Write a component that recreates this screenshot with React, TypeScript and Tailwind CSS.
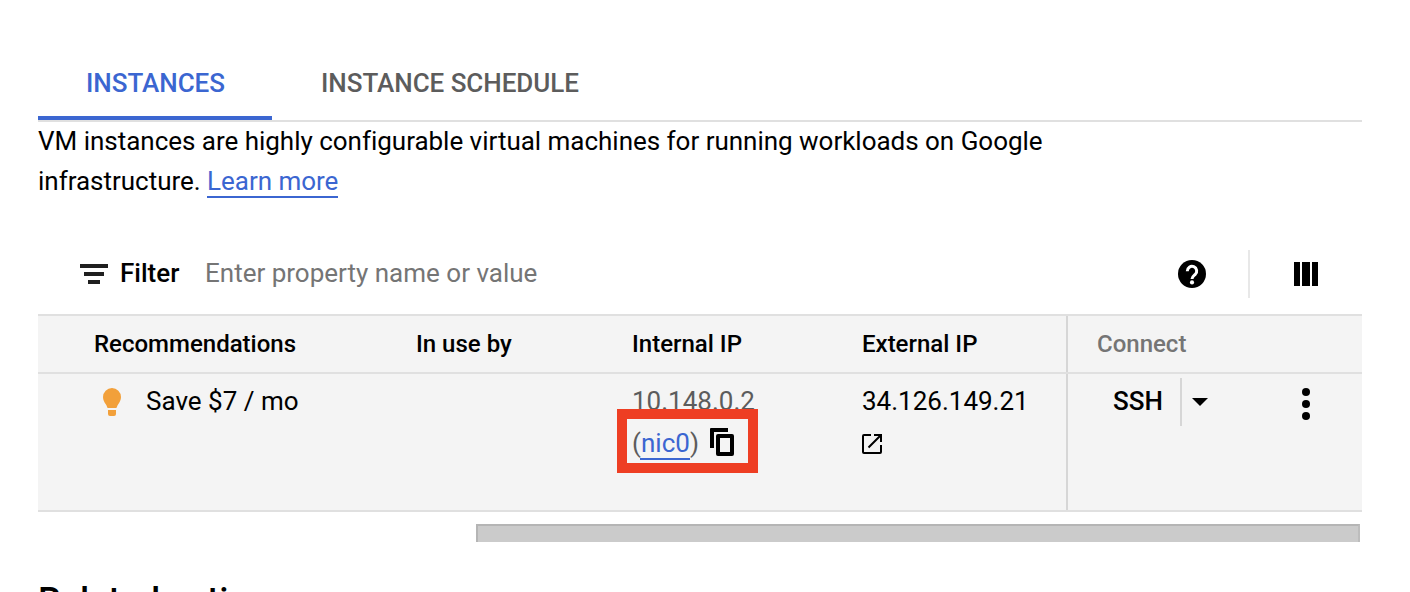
import type { ReactNode } from "react";

function Tabs() {
  return (
    <nav className="flex h-[76px] shrink-0 border-b-2 border-[#e0e0e0] text-[26px] leading-[74px] font-medium tracking-[-0.04px] whitespace-nowrap">
      <div className="w-[234px] border-b-4 border-[#3b66d1] pl-12 text-[#3b66d1]">INSTANCES</div>
      <div className="pl-[49px] text-[#5c5c5c]">INSTANCE SCHEDULE</div>
    </nav>
  );
}

function FilterBar() {
  return (
    <div className="flex h-12 items-center">
      <svg className="ml-[42px] h-5 w-7" viewBox="0 0 28 20" fill="#1f1f1f">
        <path d="M0 0h28v4H0zM4 8h20v4H4zM8 16h12v4H8z" />
      </svg>
      <span className="ml-3 w-[85px] pb-0.5 text-[26px] font-medium">Filter</span>
      <span className="flex-1 pb-0.5 text-[26px] text-[#757575]">Enter property name or value</span>
      <svg className="h-7 w-7" viewBox="0 0 28 28">
        <circle cx="14" cy="14" r="14" />
        <path
          d="M9.300 11.200a4.700 4.700 0 1 1 7.900 3.300c-1.900 1.600-3.200 2.200-3.200 4.600"
          fill="none"
          stroke="#fff"
          strokeWidth="3"
        />
        <circle cx="14" cy="22.400" r="2.100" fill="#fff" />
      </svg>
      <div className="ml-[42px] h-12 w-0.5 bg-[#e8e8e8]" />
      <svg className="mr-11 ml-11 h-6 w-6" viewBox="0 0 24 24">
        <path d="M0 0h6v24H0zM8 0h8v24H8zM18 0h6v24h-6z" />
      </svg>
    </div>
  );
}

function HeaderCell({ children }: { children: ReactNode }) {
  return <div className="leading-[56px]">{children}</div>;
}

function InstancesTable() {
  return (
    <div className="border-y-2 border-[#e0e0e0] bg-[#f4f4f4] whitespace-nowrap">
      <div className="grid h-[58px] grid-cols-[322px_216px_230px_204px_1fr] border-b-2 border-[#e0e0e0] pl-14 text-[24px] font-medium">
        <HeaderCell>Recommendations</HeaderCell>
        <HeaderCell>In use by</HeaderCell>
        <HeaderCell>Internal IP</HeaderCell>
        <HeaderCell>External IP</HeaderCell>
        <div className="border-l-2 border-[#d6d6d6] pl-[29px] leading-[56px] text-[#757575]">Connect</div>
      </div>
      <div className="grid h-[136px] grid-cols-[322px_216px_230px_204px_1fr] pl-14 text-[26px] leading-[42px]">
        <div className="flex items-start pt-1.5">
          <svg className="mt-2 ml-[9px] h-7 w-[18px]" viewBox="0 0 18 28" fill="#f2a03a">
            <path d="M9 0a9 9 0 0 0-9 9c0 3 1.200 4.800 2.600 7 .8 1.200 1.200 2 1.500 3 .2.700.5 1 1.200 1h7.400c.7 0 1-.3 1.200-1 .3-1 .7-1.800 1.500-3 1.400-2.200 2.600-4 2.600-7a9 9 0 0 0-9-9zM5 22h8v4a2 2 0 0 1-2 2H7a2 2 0 0 1-2-2z" />
          </svg>
          <span className="ml-[25px]">Save $7 / mo</span>
        </div>
        <div />
        <div className="relative pt-1.5 text-[#5c5c5c]">
          <div>10.148.0.2</div>
          <div className="flex items-start">
            <span className="w-2">(</span>
            <a className="h-[38px] w-[50px] border-b-2 border-[#3b66d1] pl-px text-[#3b66d1]">nic0</a>
            <span className="w-5">)</span>
            <svg className="mt-1.5 h-7 w-6" viewBox="0 0 24 28">
              <path d="M1 0h17v4H4v16H0V1a1 1 0 0 1 1-1z" />
              <path
                fillRule="evenodd"
                d="M8 6h14a2 2 0 0 1 2 2v18a2 2 0 0 1-2 2H8a2 2 0 0 1-2-2V8a2 2 0 0 1 2-2zM10 10v14h10V10z"
              />
            </svg>
          </div>
          <div className="absolute top-[35px] -left-[15px] h-16 w-[141px] border-[10px] border-[#ee3e23]" />
        </div>
        <div className="pt-1.5">
          <div>34.126.149.21</div>
          <svg className="mt-3 h-5 w-5" viewBox="0 0 20 20" fill="none" stroke="#000" strokeWidth="2">
            <path d="M9 1H2a1 1 0 0 0-1 1v16a1 1 0 0 0 1 1h16a1 1 0 0 0 1-1v-7M12 1h7v7M18.500 1.500 6.500 13.500" />
          </svg>
        </div>
        <div className="flex items-start border-l-2 border-[#d6d6d6] pt-1">
          <span className="mt-0.5 ml-[45px] w-[67px] font-medium">SSH</span>
          <div className="h-12 w-0.5 bg-[#d6d6d6]" />
          <svg className="mt-5 ml-2.5 h-2 w-4" viewBox="0 0 16 8">
            <path d="M0 0h16L8 8z" />
          </svg>
          <svg className="mt-2.5 ml-[94px] h-8 w-2" viewBox="0 0 8 32">
            <circle cx="4" cy="4" r="4" />
            <circle cx="4" cy="16" r="4" />
            <circle cx="4" cy="28" r="4" />
          </svg>
        </div>
      </div>
    </div>
  );
}

export default function App() {
  return (
    <main className="h-[592px] overflow-hidden bg-white pt-[46px] pr-12 pl-[38px] font-[Roboto,sans-serif] text-black">
      <Tabs />
      <p className="-mt-px h-[81px] text-[26px] leading-10 tracking-[-0.02px] whitespace-nowrap">
        VM instances are highly configurable virtual machines for running workloads on Google
        <br />
        infrastructure.{" "}
        <a className="border-b-2 border-[#3b66d1] text-[#3b66d1]">Learn more</a>
      </p>
      <div className="mt-12 mb-4">
        <FilterBar />
      </div>
      <InstancesTable />
      <div className="mt-3 mr-0.5 ml-[438px] h-[18px] border-t-2 border-r-2 border-l-2 border-[#b5b5b5] border-r-[#bdbdbd] bg-[#cbcbcb]" />
      <h2 className="mt-[38px] text-[36px] leading-[42px] font-medium">Related actions</h2>
    </main>
  );
}
